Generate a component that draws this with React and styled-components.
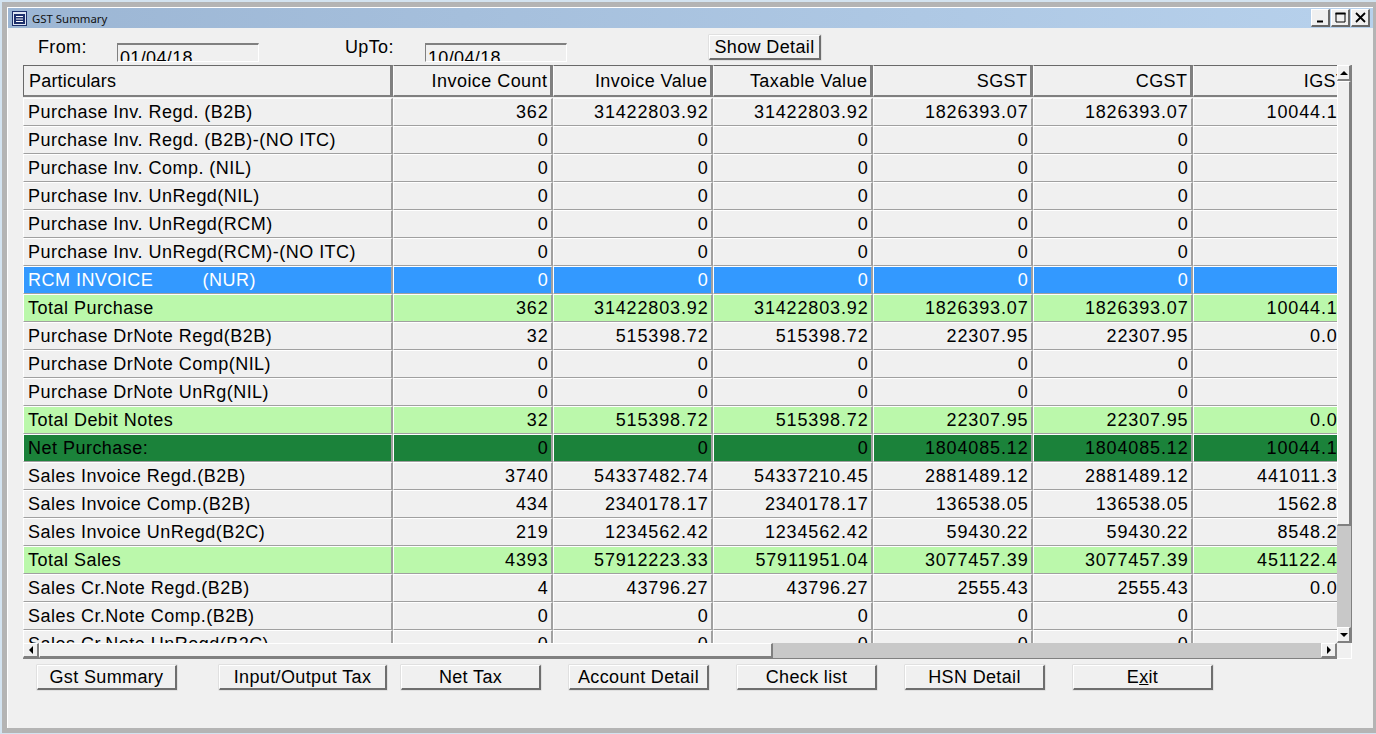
import styled, { createGlobalStyle } from "styled-components";

const GlobalStyle = createGlobalStyle`
  html, body {
    margin: 0;
    padding: 0;
    background: #d3e3f0;
    overflow: hidden;
  }
  #root {
    width: 1376px;
    height: 734px;
  }
`;

const FONT = `"Liberation Sans", Arial, sans-serif`;

const Desktop = styled.div`
  box-sizing: border-box;
  width: 1376px;
  height: 734px;
  padding: 2px 0 1px 2px;
  font-family: ${FONT};
  font-size: 18px;
  letter-spacing: 0.48px;
  color: #000;
`;

const Frame = styled.div`
  box-sizing: border-box;
  height: 731px;
  display: flex;
  flex-direction: column;
  background: #f0f0f0;
  border-style: solid;
  border-color: #b4b4b4;
  border-width: 5px 3px 5px 5px;
  box-shadow: inset 1px 1px 0 #fff;
`;

const TitleBar = styled.div`
  flex: none;
  height: 20px;
  margin: 1px 0 0 1px;
  display: flex;
  align-items: center;
  padding: 0 3px 0 4px;
  background: linear-gradient(to right, #9cb6d4, #b7d1ec);
`;

const TitleText = styled.span`
  font-family: "Noto Sans", sans-serif;
  font-size: 11.4px;
  letter-spacing: 0;
  margin-left: 5px;
  color: #111;
  flex: 1;
`;

const WinButtons = styled.div`
  display: flex;
  gap: 1px;
`;

const WinButton = styled.div`
  box-sizing: border-box;
  width: 19px;
  height: 18px;
  display: flex;
  align-items: center;
  justify-content: center;
  background: #f0f0f0;
  border-style: solid;
  border-width: 1px 2px 2px 1px;
  border-color: #fff #696969 #696969 #fff;
`;

const Content = styled.div`
  flex: 1;
  padding-left: 16px;
  display: flex;
  flex-direction: column;
`;

const FilterRow = styled.div`
  flex: none;
  height: 37px;
  display: flex;
  align-items: flex-start;
`;

const FieldLabel = styled.label`
  width: ${(p) => p.$w}px;
  margin-left: ${(p) => p.$left}px;
  margin-top: 8px;
  line-height: 22px;
  letter-spacing: 0.36px;
`;

const DateField = styled.div`
  box-sizing: border-box;
  width: 142px;
  height: 19px;
  margin-top: 15px;
  padding: 2px 0 0 2px;
  overflow: hidden;
  line-height: 22px;
  letter-spacing: 0.36px;
  border-style: solid;
  border-width: 2px 1px 1px 1px;
  border-color: #808080 #fff #fff #808080;
`;

const PushButton = styled.button`
  box-sizing: border-box;
  width: ${(p) => p.$w}px;
  height: 25px;
  margin: 0 0 0 ${(p) => p.$left}px;
  padding: 0;
  background: #f0f0f0;
  border-style: solid;
  border-width: 1px 2px 2px 1px;
  border-color: #fff #6e6e6e #6e6e6e #fff;
  box-shadow: 0 0 0 0.5px #d0d0d0;
  font: inherit;
  letter-spacing: 0.36px;
  line-height: 20px;
  color: #000;
`;

const DetailButton = styled(PushButton)`
  margin-top: 7px;
`;

const GridPanel = styled.div`
  flex: none;
  width: 1329px;
  display: grid;
  grid-template-columns: 1314px 15px;
  grid-template-rows: 578px 16px;
`;

const GridViewport = styled.div`
  overflow: hidden;
`;

const COLUMNS = "370px 160px 160px 160px 160px 160px 160px";

const HeaderRow = styled.div`
  display: grid;
  grid-template-columns: ${COLUMNS};
  height: 33px;
`;

const HeaderCell = styled.div`
  box-sizing: border-box;
  display: flex;
  align-items: center;
  justify-content: ${(p) => (p.$left ? "flex-start" : "flex-end")};
  padding: ${(p) => (p.$left ? "1px 0 0 5px" : "1px 2.5px 0 0")};
  height: 32px;
  letter-spacing: ${(p) => (p.$left ? "0.2px" : "0.45px")};
  background: #f0f0f0;
  border-style: solid;
  border-width: 1px 3px 2px 1px;
  border-color: #696969 #808080 #808080 ${(p) => (p.$left ? "#696969" : "#fff")};
`;

const ROW_STYLES = {
  normal: { bg: "#f0f0f0", fg: "#000" },
  total: { bg: "#bbf8ab", fg: "#000" },
  net: { bg: "#1b823a", fg: "#000" },
  active: { bg: "#3399ff", fg: "#fff" },
};

const DataRow = styled.div`
  display: grid;
  grid-template-columns: ${COLUMNS};
  height: 28px;
  color: ${(p) => ROW_STYLES[p.$kind].fg};
`;

const DataCell = styled.div`
  box-sizing: border-box;
  height: 28px;
  line-height: 27px;
  white-space: pre;
  text-align: ${(p) => (p.$left ? "left" : "right")};
  letter-spacing: ${(p) => (p.$left ? "0.48px" : "0.85px")};
  padding: ${(p) => (p.$left ? "0 0 0 4px" : "0 2.5px 0 0")};
  background: ${(p) => ROW_STYLES[p.$kind].bg};
  border-style: solid;
  border-width: 1px 2px 1px 1px;
  border-color: #fff #a0a0a0 #a0a0a0 #fff;
`;

const VScroll = styled.div`
  display: flex;
  flex-direction: column;
  background: #c8c8c8;
  border-right: 1px solid #808080;
`;

const HScroll = styled.div`
  display: flex;
  background: #c8c8c8;
  border-bottom: 1px solid #808080;
`;

const ScrollButton = styled.div`
  box-sizing: border-box;
  flex: none;
  width: ${(p) => p.$w};
  height: ${(p) => p.$h};
  display: flex;
  align-items: center;
  justify-content: center;
  background: #f0f0f0;
  border-style: solid;
  border-width: 1px 2px 2px 1px;
  border-color: #fff #808080 #808080 #fff;
`;

const ScrollSpace = styled.div`
  flex: 1;
`;

const Corner = styled.div`
  background: #f0f0f0;
  border-right: 1px solid #fff;
  border-bottom: 1px solid #fff;
`;

const Arrow = styled.i`
  width: 0;
  height: 0;
  border-style: solid;
  border-color: transparent;
  ${(p) =>
    ({
      up: "border-width: 0 4px 4px; border-bottom-color: #000;",
      down: "border-width: 4px 4px 0; border-top-color: #000;",
      left: "border-width: 4px 4px 4px 0; border-right-color: #000;",
      right: "border-width: 4px 0 4px 4px; border-left-color: #000;",
    })[p.$dir]}
`;

const ButtonRow = styled.div`
  flex: none;
  display: flex;
  margin-top: 6px;
`;

const ROWS = [
  ["Purchase Inv. Regd. (B2B)", "normal", "362", "31422803.92", "31422803.92", "1826393.07", "1826393.07", "10044.12"],
  ["Purchase Inv. Regd. (B2B)-(NO ITC)", "normal", "0", "0", "0", "0", "0", "0"],
  ["Purchase Inv. Comp. (NIL)", "normal", "0", "0", "0", "0", "0", "0"],
  ["Purchase Inv. UnRegd(NIL)", "normal", "0", "0", "0", "0", "0", "0"],
  ["Purchase Inv. UnRegd(RCM)", "normal", "0", "0", "0", "0", "0", "0"],
  ["Purchase Inv. UnRegd(RCM)-(NO ITC)", "normal", "0", "0", "0", "0", "0", "0"],
  ["RCM INVOICE         (NUR)", "active", "0", "0", "0", "0", "0", "0"],
  ["Total Purchase", "total", "362", "31422803.92", "31422803.92", "1826393.07", "1826393.07", "10044.12"],
  ["Purchase DrNote Regd(B2B)", "normal", "32", "515398.72", "515398.72", "22307.95", "22307.95", "0.00"],
  ["Purchase DrNote Comp(NIL)", "normal", "0", "0", "0", "0", "0", "0"],
  ["Purchase DrNote UnRg(NIL)", "normal", "0", "0", "0", "0", "0", "0"],
  ["Total Debit Notes", "total", "32", "515398.72", "515398.72", "22307.95", "22307.95", "0.00"],
  ["Net Purchase:", "net", "0", "0", "0", "1804085.12", "1804085.12", "10044.12"],
  ["Sales Invoice Regd.(B2B)", "normal", "3740", "54337482.74", "54337210.45", "2881489.12", "2881489.12", "441011.30"],
  ["Sales Invoice Comp.(B2B)", "normal", "434", "2340178.17", "2340178.17", "136538.05", "136538.05", "1562.80"],
  ["Sales Invoice UnRegd(B2C)", "normal", "219", "1234562.42", "1234562.42", "59430.22", "59430.22", "8548.20"],
  ["Total Sales", "total", "4393", "57912223.33", "57911951.04", "3077457.39", "3077457.39", "451122.40"],
  ["Sales Cr.Note Regd.(B2B)", "normal", "4", "43796.27", "43796.27", "2555.43", "2555.43", "0.00"],
  ["Sales Cr.Note Comp.(B2B)", "normal", "0", "0", "0", "0", "0", "0"],
  ["Sales Cr.Note UnRegd(B2C)", "normal", "0", "0", "0", "0", "0", "0"],
];

const HEADERS = ["Invoice Count", "Invoice Value", "Taxable Value", "SGST", "CGST", "IGST"];

const ACTIONS = [
  { label: "Gst Summary", w: 140, left: 14 },
  { label: "Input/Output Tax", w: 168, left: 42 },
  { label: "Net Tax", w: 140, left: 14 },
  { label: "Account Detail", w: 140, left: 28 },
  { label: "Check list", w: 140, left: 28 },
  { label: "HSN Detail", w: 140, left: 28 },
  { label: <>E<u>x</u>it</>, w: 140, left: 28 },
];

function AppIcon() {
  return (
    <svg width="15" height="15" viewBox="0 0 15 15">
      <rect x="0.5" y="0.5" width="14" height="14" fill="#dfe6f2" stroke="#1d2f6b" />
      <rect x="2" y="3" width="11" height="10" fill="#1d2f6b" />
      <path d="M4 5.5h7M4 8h7M4 10.5h7" stroke="#fff" strokeWidth="1" />
    </svg>
  );
}

function App() {
  return (
    <>
      <GlobalStyle />
      <Desktop>
        <Frame>
          <TitleBar>
            <AppIcon />
            <TitleText>GST Summary</TitleText>
            <WinButtons>
              <WinButton>
                <svg width="11" height="11" viewBox="0 0 11 11">
                  <path d="M2 9.5h6" stroke="#000" strokeWidth="2" />
                </svg>
              </WinButton>
              <WinButton>
                <svg width="11" height="11" viewBox="0 0 11 11">
                  <path d="M1 1v9h9V1" fill="none" stroke="#000" strokeWidth="1" />
                  <path d="M0.5 1.5h10" stroke="#000" strokeWidth="2" />
                </svg>
              </WinButton>
              <WinButton>
                <svg width="11" height="11" viewBox="0 0 11 11">
                  <path d="M1 1l9 9M10 1l-9 9" stroke="#000" strokeWidth="1.8" />
                </svg>
              </WinButton>
            </WinButtons>
          </TitleBar>
          <Content>
            <FilterRow>
              <FieldLabel $w={79} $left={15}>From:</FieldLabel>
              <DateField>01/04/18</DateField>
              <FieldLabel $w={80} $left={86}>UpTo:</FieldLabel>
              <DateField>10/04/18</DateField>
              <DetailButton $w={112} $left={142}>Show Detail</DetailButton>
            </FilterRow>
            <GridPanel>
              <GridViewport>
                <HeaderRow>
                  <HeaderCell $left>Particulars</HeaderCell>
                  {HEADERS.map((h) => (
                    <HeaderCell key={h}>{h}</HeaderCell>
                  ))}
                </HeaderRow>
                {ROWS.map(([name, kind, ...values]) => (
                  <DataRow key={name} $kind={kind}>
                    <DataCell $left $kind={kind}>{name}</DataCell>
                    {values.map((v, i) => (
                      <DataCell key={i} $kind={kind}>{v}</DataCell>
                    ))}
                  </DataRow>
                ))}
              </GridViewport>
              <VScroll>
                <ScrollButton $w="100%" $h="16px"><Arrow $dir="up" /></ScrollButton>
                <ScrollButton $w="100%" $h="445px" />
                <ScrollSpace />
                <ScrollButton $w="100%" $h="16px"><Arrow $dir="down" /></ScrollButton>
              </VScroll>
              <HScroll>
                <ScrollButton $w="16px" $h="100%"><Arrow $dir="left" /></ScrollButton>
                <ScrollButton $w="734px" $h="100%" />
                <ScrollSpace />
                <ScrollButton $w="16px" $h="100%"><Arrow $dir="right" /></ScrollButton>
              </HScroll>
              <Corner />
            </GridPanel>
            <ButtonRow>
              {ACTIONS.map((a, i) => (
                <PushButton key={i} $w={a.w} $left={a.left}>{a.label}</PushButton>
              ))}
            </ButtonRow>
          </Content>
        </Frame>
      </Desktop>
    </>
  );
}

export default App;
